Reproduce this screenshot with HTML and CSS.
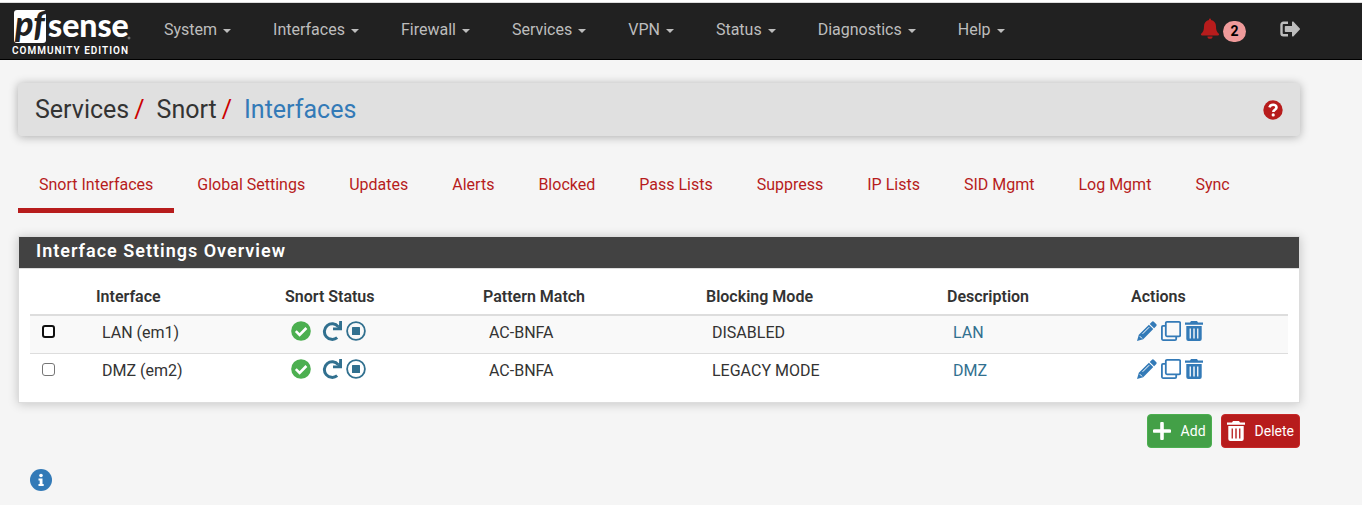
FILE: index.html
```html
<!DOCTYPE html>
<html lang="en">
<head>
<meta charset="utf-8">
<title>Services: Snort: Interfaces</title>
<link rel="stylesheet" href="styles.css">
</head>
<body>
<svg class="defs" aria-hidden="true">
  <symbol id="i-check" viewBox="0 0 20 20"><circle cx="10" cy="10" r="9.8" fill="#4caf50"/><path d="M4.800 10.200l3.800 3.800 6.800-7" fill="none" stroke="#fff" stroke-width="2.6"/></symbol>
  <symbol id="i-redo" viewBox="0 0 20 20"><path d="M16.200 5.600A7.800 7.800 0 1 0 15.200 16.600" fill="none" stroke="currentColor" stroke-width="3"/><path d="M17.200 0H20v9.200h-9V6.400h4.200l1.800-1.800z" fill="currentColor"/></symbol>
  <symbol id="i-stop" viewBox="0 0 20 20"><circle cx="10" cy="10" r="8.900" fill="none" stroke="currentColor" stroke-width="1.800"/><rect x="6" y="6" width="8" height="8" rx=".5" fill="currentColor"/></symbol>
  <symbol id="i-pencil" viewBox="0 0 20 20"><path fill="currentColor" d="M14.700.9a1.700 1.700 0 0 1 2.400 0l2 2a1.700 1.700 0 0 1 0 2.400l-2 2-4.400-4.400zM11.900 3.700l4.400 4.400L6.200 18.200 0 20l1.800-6.200z"/><path d="M5.600 12.800l6.600-6.600M2.800 15.200l2.200 2.200" stroke="#fff" stroke-width="1" fill="none"/></symbol>
  <symbol id="i-clone" viewBox="0 0 20 20"><path fill="none" stroke="currentColor" stroke-width="1.800" d="M6 .9h12a1.200 1.200 0 0 1 1.200 1.200v12a1.200 1.200 0 0 1-1.200 1.200H6a1.200 1.200 0 0 1-1.200-1.200v-12A1.200 1.200 0 0 1 6 .9zM4.800 4.800H2A1.200 1.200 0 0 0 .9 6v12A1.200 1.200 0 0 0 2 19.100h12a1.200 1.200 0 0 0 1.200-1.200v-2.700"/></symbol>
  <symbol id="i-trash" viewBox="0 0 18 20"><path fill="currentColor" fill-rule="evenodd" d="M0 1.500h5L6 0h6l1 1.500h5v2.300H0zM1.300 5h15.400v13a2 2 0 0 1-2 2H3.300a2 2 0 0 1-2-2zM4.600 7.400v10h1.300v-10zM8.300 7.400v10h1.400v-10zM12.100 7.400v10h1.300v-10z"/></symbol>
</svg>
<header class="navbar">
  <a class="brand" href="#" aria-label="pfSense Community Edition">
    <svg class="logo" viewBox="0 0 120 36">
      <rect x="2" y="1" width="32" height="33" rx="3" fill="#fff"/>
      <text class="logo-pf" x="3" y="27">pf</text>
      <text class="logo-sense" x="36" y="28">sense</text>
      <circle cx="117" cy="29" r="1" fill="none" stroke="#bbb" stroke-width=".6"/>
    </svg>
    <span class="edition">COMMUNITY EDITION</span>
  </a>
  <nav class="menu">
    <a href="#">System <span class="caret"></span></a>
    <a href="#">Interfaces <span class="caret"></span></a>
    <a href="#">Firewall <span class="caret"></span></a>
    <a href="#">Services <span class="caret"></span></a>
    <a href="#">VPN <span class="caret"></span></a>
    <a href="#">Status <span class="caret"></span></a>
    <a href="#">Diagnostics <span class="caret"></span></a>
    <a href="#">Help <span class="caret"></span></a>
  </nav>
  <div class="tools">
    <a class="notices" href="#" aria-label="Notices">
      <svg class="bell" viewBox="0 0 18 21"><path fill="currentColor" d="M8 1.500a1 1 0 0 1 2 0v.6c3.200.6 5 3.200 5 6.200 0 4 .8 5.600 2.600 7.200.8.800.4 2-.7 2H1.100c-1.100 0-1.500-1.200-.7-2C2.200 13.900 3 12.300 3 8.300c0-3 1.800-5.600 5-6.200zM6.400 18.400h5.200a2.600 2.400 0 0 1-5.200 0z"/></svg>
      <span class="badge">2</span>
    </a>
    <a class="logout" href="#" aria-label="Log out">
      <svg class="exit" viewBox="0 0 20 16"><path fill="none" stroke="currentColor" stroke-width="2.400" d="M8 1.700H3.500a2 2 0 0 0-2 2v8.600a2 2 0 0 0 2 2H8"/><path fill="currentColor" d="M5.500 5H12V1.200a.8.8 0 0 1 1.300-.6l6.500 6.800a1 1 0 0 1 0 1.200l-6.500 6.800a.8.8 0 0 1-1.300-.6V11H5.500a.7.7 0 0 1-.7-.7V5.700a.7.700 0 0 1 .7-.7z"/></svg>
    </a>
  </div>
</header>
<main class="page">
  <div class="crumbs">
    <ol>
      <li>Services</li>
      <li>Snort</li>
      <li><a href="#">Interfaces</a></li>
    </ol>
    <a class="help" href="#" aria-label="Help"><svg viewBox="0 0 20 20"><circle cx="10" cy="10" r="9.700" fill="#b71c1c"/><path d="M6.400 7.400C7 5.600 8.300 4.800 10.100 4.800c2 0 3.400 1 3.400 2.700 0 2.200-3.200 2.200-3.200 4.400" fill="none" stroke="#fff" stroke-width="2.600"/><circle cx="10.200" cy="14.900" r="1.600" fill="#fff"/></svg></a>
  </div>
  <nav class="tabs">
    <a class="active" href="#">Snort Interfaces</a>
    <a href="#">Global Settings</a>
    <a href="#">Updates</a>
    <a href="#">Alerts</a>
    <a href="#">Blocked</a>
    <a href="#">Pass Lists</a>
    <a href="#">Suppress</a>
    <a href="#">IP Lists</a>
    <a href="#">SID Mgmt</a>
    <a href="#">Log Mgmt</a>
    <a href="#">Sync</a>
  </nav>
  <section class="panel">
    <h2>Interface Settings Overview</h2>
    <div class="panel-body">
      <table>
        <colgroup><col class="c-check"><col class="c-if"><col class="c-status"><col class="c-match"><col class="c-mode"><col class="c-desc"><col class="c-act"></colgroup>
        <thead>
          <tr><th></th><th>Interface</th><th>Snort Status</th><th>Pattern Match</th><th>Blocking Mode</th><th>Description</th><th>Actions</th></tr>
        </thead>
        <tbody>
          <tr>
            <td><input class="focused" type="checkbox" aria-label="Select LAN"></td>
            <td>LAN (em1)</td>
            <td><div class="icons status"><svg class="ok"><use href="#i-check"/></svg><a href="#" aria-label="Restart"><svg><use href="#i-redo"/></svg></a><a href="#" aria-label="Stop"><svg><use href="#i-stop"/></svg></a></div></td>
            <td>AC-BNFA</td>
            <td>DISABLED</td>
            <td class="desc">LAN</td>
            <td><div class="icons"><a href="#" aria-label="Edit"><svg><use href="#i-pencil"/></svg></a><a href="#" aria-label="Clone"><svg><use href="#i-clone"/></svg></a><a href="#" aria-label="Delete"><svg class="trash"><use href="#i-trash"/></svg></a></div></td>
          </tr>
          <tr>
            <td><input type="checkbox" aria-label="Select DMZ"></td>
            <td>DMZ (em2)</td>
            <td><div class="icons status"><svg class="ok"><use href="#i-check"/></svg><a href="#" aria-label="Restart"><svg><use href="#i-redo"/></svg></a><a href="#" aria-label="Stop"><svg><use href="#i-stop"/></svg></a></div></td>
            <td>AC-BNFA</td>
            <td>LEGACY MODE</td>
            <td class="desc">DMZ</td>
            <td><div class="icons"><a href="#" aria-label="Edit"><svg><use href="#i-pencil"/></svg></a><a href="#" aria-label="Clone"><svg><use href="#i-clone"/></svg></a><a href="#" aria-label="Delete"><svg class="trash"><use href="#i-trash"/></svg></a></div></td>
          </tr>
        </tbody>
      </table>
    </div>
  </section>
  <div class="buttons">
    <button class="add" type="button"><svg viewBox="0 0 18 18"><path d="M9 1.500v15M1.500 9h15" stroke="#fff" stroke-width="3.600" stroke-linecap="round"/></svg>Add</button>
    <button class="delete" type="button"><svg class="bin"><use href="#i-trash"/></svg>Delete</button>
  </div>
  <a class="info" href="#" aria-label="Information"><svg viewBox="0 0 22 22"><circle cx="11" cy="11" r="11" fill="#337ab7"/><circle cx="11" cy="6.500" r="1.800" fill="#fff"/><path d="M8.500 9.500h4v5.500h1.200v2H8.500v-2h1.200v-3.500H8.500z" fill="#fff"/></svg></a>
</main>
</body>
</html>
```
FILE: styles.css
```css
* { box-sizing: border-box; }
body {
  margin: 0;
  padding-top: 2px;
  background: #f5f5f5;
  color: #333;
  font: 16px/22px Roboto, "Liberation Sans", sans-serif;
}
a { color: #337ab7; text-decoration: none; }
svg { display: block; }
.defs { display: none; }

.navbar {
  display: flex;
  align-items: flex-start;
  height: 58px;
  padding: 0 62px 0 12px;
  background: #212121;
  border-top: 1px solid #ddd;
  border-bottom: 1px solid #000;
  box-shadow: 0 -2px 0 #fff;
}
.brand { width: 131px; padding-top: 6px; color: #fff; }
.logo { width: 120px; height: 36px; overflow: visible; }
.logo-pf { font: italic 900 34px Lato, sans-serif; fill: #212121; }
.logo-sense { font: 900 32px Lato, sans-serif; fill: #fff; }
.edition { display: block; font-size: 10px; font-weight: 600; line-height: 12px; letter-spacing: 1px; white-space: nowrap; }
.menu { display: flex; }
.menu a { display: flex; align-items: center; gap: 6px; padding: 16px 21px; color: #bdbdbd; }
.caret { border: 4px solid transparent; border-top-color: currentColor; border-bottom: 0; margin-top: 2px; }
.tools { display: flex; gap: 34px; margin-left: auto; padding-top: 15px; }
.notices { display: flex; gap: 4px; color: #b71c1c; }
.bell { width: 18px; height: 21px; }
.badge { min-width: 23px; height: 21px; margin-top: 3px; border-radius: 11px; background: #ef9a9a; color: #000; font-size: 14px; font-weight: 700; line-height: 21px; text-align: center; }
.logout { color: #bdbdbd; padding-top: 3px; }
.exit { width: 20px; height: 16px; }

.page { padding: 23px 62px 12px 18px; }
.crumbs {
  display: flex;
  align-items: center;
  justify-content: space-between;
  height: 53px;
  padding: 0 17px;
  border-radius: 4px;
  background: #e0e0e0;
  box-shadow: 0 1px 10px rgba(0, 0, 0, .3);
}
.crumbs ol { display: flex; margin: 0; padding: 0; list-style: none; font-size: 25px; line-height: 30px; }
.crumbs li + li::before { content: "/"; padding: 0 12px 0 5px; color: #c00; }
.help svg { width: 20px; height: 20px; }

.tabs { display: flex; gap: 2px; margin-top: 28px; }
.tabs a { padding: 10px 21px 12px; border-bottom: 5px solid transparent; color: #b71c1c; }
.tabs .active { border-color: #b71c1c; }

.panel { margin-top: 23px; border: 1px solid #ddd; background: #fff; box-shadow: 0 1px 10px rgba(0, 0, 0, .2); }
.panel h2 { margin: 0; padding: 3px 17px 6px; border-bottom: 1px solid #ddd; background: #424242; color: #fff; font-size: 18px; font-weight: 600; line-height: 22px; letter-spacing: 1px; }
.panel-body { padding: 11px; }
table { width: 100%; table-layout: fixed; border-collapse: collapse; }
.c-check { width: 60px; }
.c-if { width: 189px; }
.c-status { width: 198px; }
.c-match { width: 223px; }
.c-mode { width: 241px; }
.c-desc { width: 184px; }
.c-act { width: 163px; }
th { height: 35px; padding: 0 6px; border-bottom: 2px solid #ddd; font-weight: 600; text-align: left; }
td { height: 38px; padding: 0 12px 2px; }
tbody tr:nth-child(odd) { background: #f9f9f9; }
tbody tr + tr td { border-top: 1px solid #ddd; }
td.desc { color: #31708f; }
td input { display: block; width: 13px; height: 13px; margin: 0 0 4px; appearance: none; border: 1px solid #767676; border-radius: 3px; background: #fff; }
td input.focused { border: 2px solid #101010; }
.icons { display: flex; gap: 4px; margin-bottom: 4px; }
.icons svg { width: 20px; height: 20px; }
.icons .trash { width: 18px; }
.status a { color: #31708f; }
.status .ok { margin-right: 7px; }

.buttons { display: flex; justify-content: flex-end; gap: 9px; margin-top: 11px; }
button { display: flex; align-items: center; gap: 10px; height: 34px; padding: 0 5px; border: 1px solid; border-radius: 4px; color: #fff; font: 14px Roboto, sans-serif; }
button svg { width: 18px; height: 18px; }
button .bin { height: 20px; }
.add { background: #43a047; border-color: #4caf50; }
.delete { background: #b71c1c; border-color: #c62828; }
.info { display: block; width: 22px; margin: 21px 0 0 12px; }
.info svg { width: 22px; height: 22px; }
```
